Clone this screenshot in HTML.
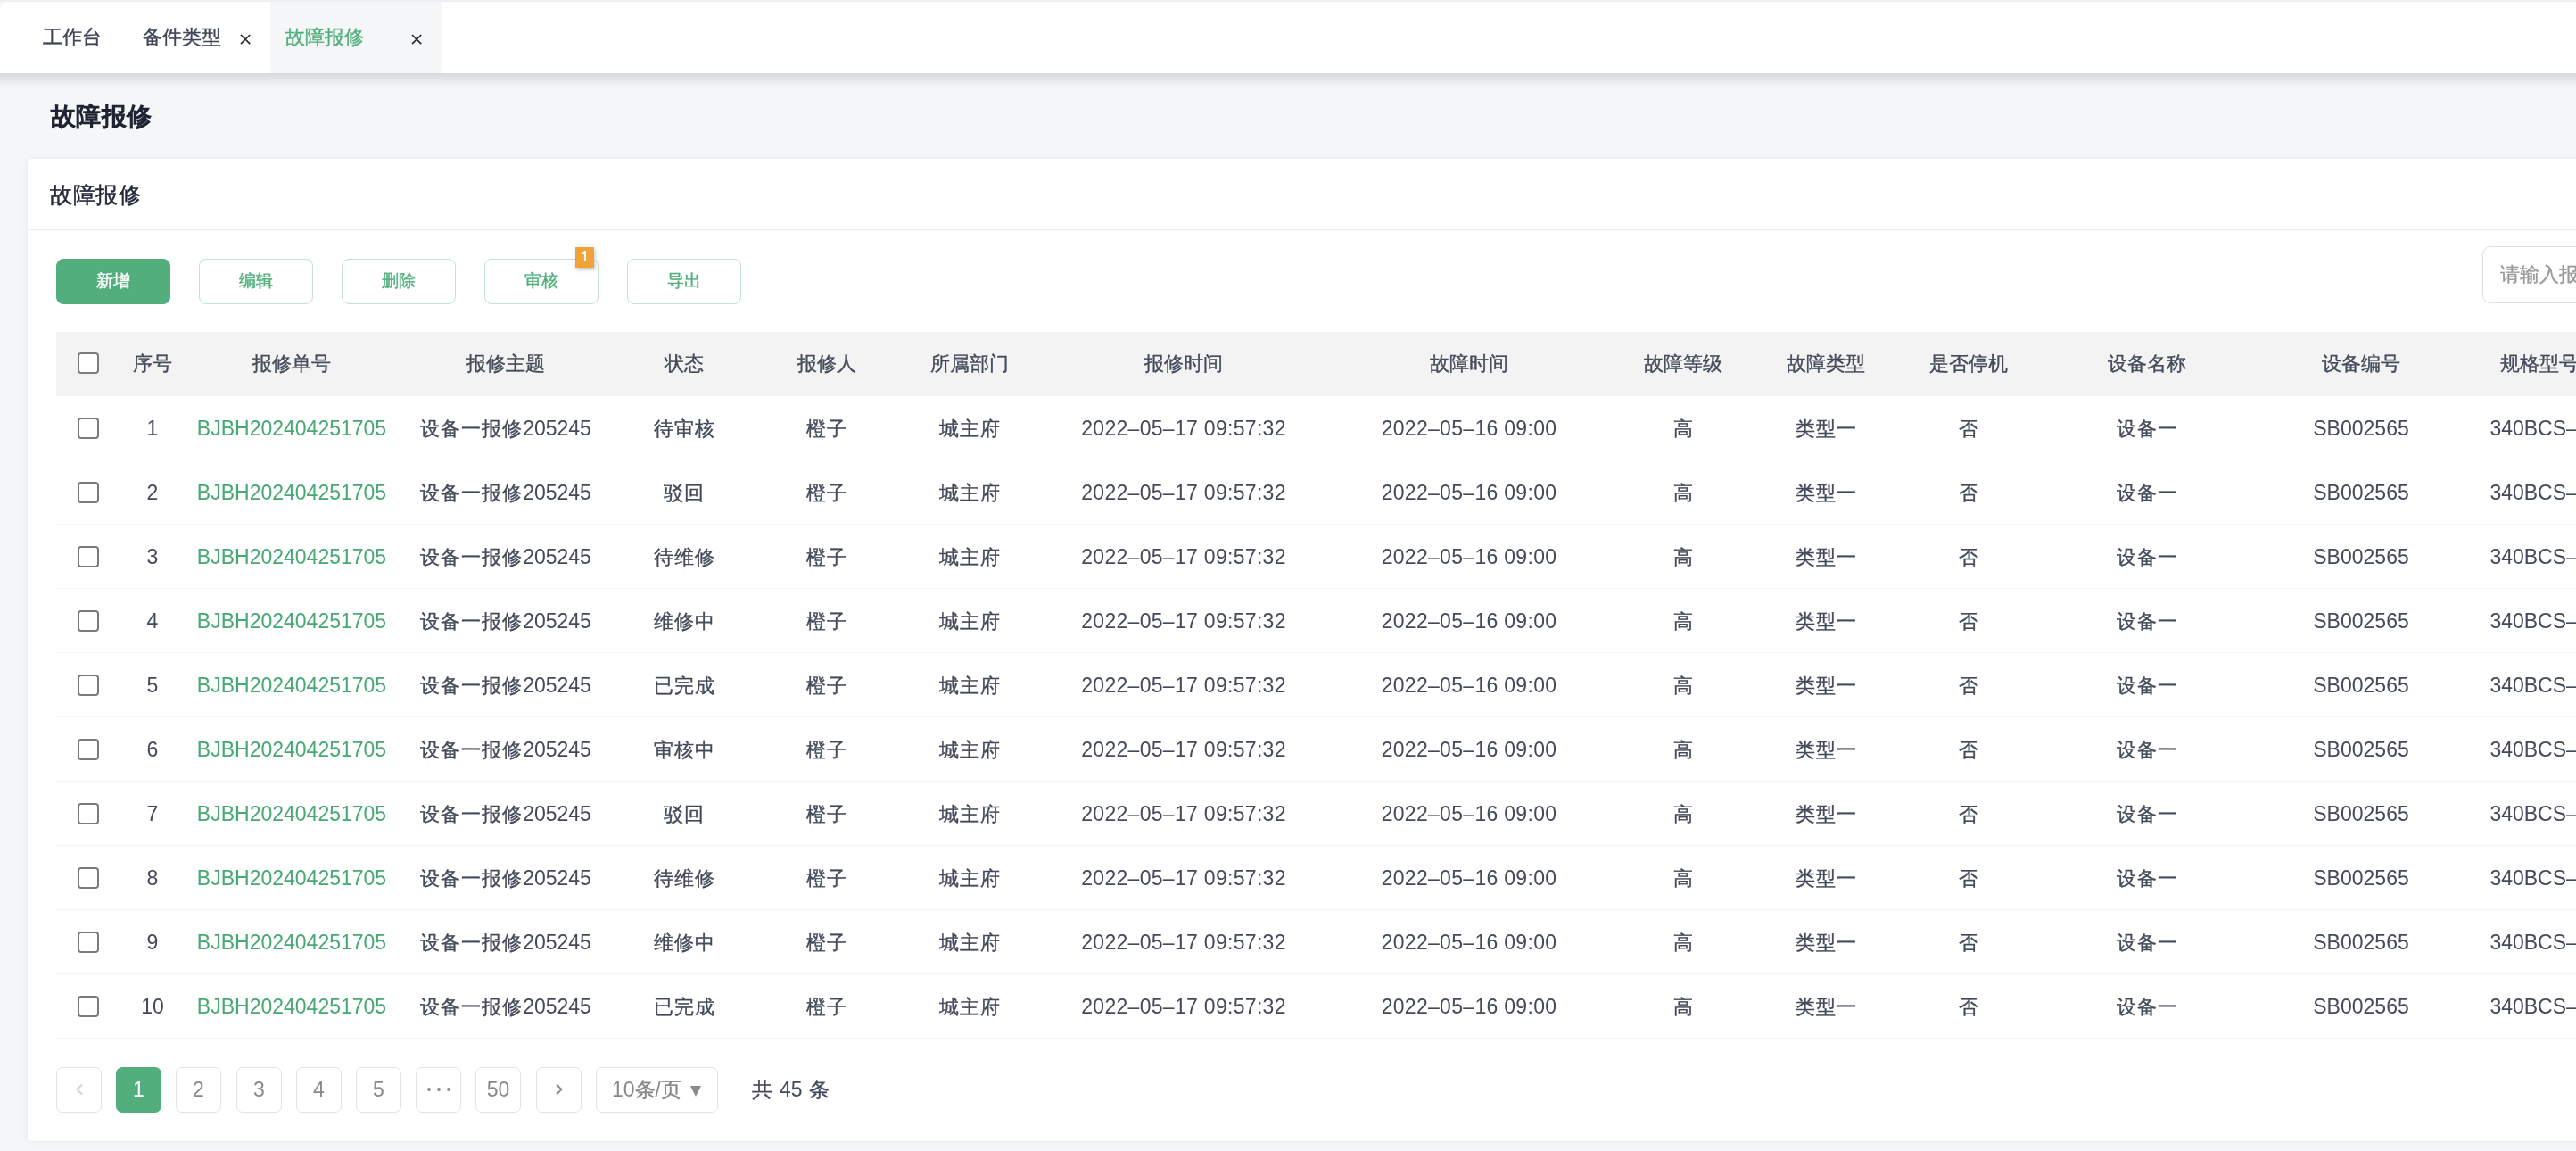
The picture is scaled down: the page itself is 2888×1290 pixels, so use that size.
<!DOCTYPE html>
<html><head><meta charset="utf-8">
<style>
*{margin:0;padding:0;box-sizing:border-box}
html,body{width:2888px;height:1290px;overflow:hidden;-webkit-font-smoothing:antialiased;background:#f5f6f8;font-family:"Liberation Sans",sans-serif;color:#434a5a}
.abs{position:absolute}
b.c{font-weight:inherit;-webkit-text-stroke:0.35px currentColor}
.td b.c{font-size:22px;letter-spacing:1px}
.btn b.c{-webkit-text-stroke:0.4px currentColor}
#title b.c{-webkit-text-stroke:1.4px currentColor}
#ctitle b.c{-webkit-text-stroke:0.45px currentColor}
#topline{position:absolute;left:0;top:0;width:2888px;height:2px;background:#edeff2}
#tabs{position:absolute;left:0;top:2px;width:2900px;height:80px;background:#fff;border-top-left-radius:9px}
#tabshadow{position:absolute;left:0;top:82px;width:2888px;height:16px;background:linear-gradient(#d8d9dc 0px,#dcdde0 3px,#e6e7ea 8px,#f0f1f3 12px,#f5f6f8 16px)}
.tab{position:absolute;top:0;height:80px;line-height:80px;font-size:22px;color:#3f4656;white-space:nowrap}
.tab.act{background:#f5f6f8;color:#4fae7b}
.x{position:absolute;top:36px;width:12px;height:12px}
.x svg{display:block}
#title{position:absolute;left:57px;top:111px;letter-spacing:0.4px;font-size:28px;font-weight:400;color:#1e2332;line-height:40px}
#card{position:absolute;left:31px;top:178px;width:2900px;height:1101px;background:#fff;border-radius:4px;box-shadow:0 0 2px rgba(0,0,0,0.07),0 0 10px rgba(0,0,0,0.05)}
#ctitle{position:absolute;left:56px;top:198px;letter-spacing:0.7px;font-size:25px;color:#22283a;line-height:40px}
#divider{position:absolute;left:31px;top:257px;width:2860px;height:1px;background:#e9ebee}
.btn{position:absolute;top:290px;width:128px;height:51px;border-radius:8px;border:1.5px solid #bfe4cf;background:#fff;color:#4fae7b;font-size:19px;text-align:center;line-height:48px;-webkit-text-stroke:0.5px currentColor}
.btn.pri{background:#52ae7d;border-color:#52ae7d;color:#fff}
.badge{position:absolute;left:645px;top:277px;width:21px;height:23px;background:#f0a33a;color:#fff;font-size:16px;font-weight:400;-webkit-text-stroke:0.7px #fff;text-align:center;line-height:23px;box-shadow:1px 2px 4px rgba(0,0,0,0.25)}
#search{position:absolute;left:2783px;top:276px;width:300px;height:64px;border:1.5px solid #dcdfe6;border-radius:9px;background:#fff}
#search span{position:absolute;left:19px;top:0;line-height:61px;font-size:22px;color:#999}
#thead{position:absolute;left:63px;top:372px;width:2900px;height:72px;background:#f3f3f3}
.th{position:absolute;top:372px;height:72px;line-height:72px;text-align:center;font-size:22px;color:#434a5a;white-space:nowrap}
.tr{position:absolute;left:0;width:2888px;height:72px}
.tr:after{content:"";position:absolute;left:63px;top:71px;width:2900px;height:1px;background:#f3f4f6}
.td{position:absolute;top:0;height:72px;line-height:72px;text-align:center;font-size:23px;color:#434a5a;white-space:nowrap}
.lnk{color:#46a872}
.cb{display:inline-block;width:24px;height:24px;border:2px solid #7b7b7b;border-radius:4px;vertical-align:middle;margin-top:-4px;background:#fff}
.pg{position:absolute;top:1196px;width:51px;height:51px;border:1.5px solid #e3e3e3;border-radius:7px;text-align:center;line-height:48px;font-size:23px;color:#888}
.pg.on{background:#52ae7d;border-color:#52ae7d;color:#fff}
.chev{vertical-align:middle;margin-top:-3px}
#sel{position:absolute;left:668px;top:1196px;width:137px;height:51px;border:1.5px solid #e3e3e3;border-radius:7px;font-size:23px;color:#888;line-height:48px;white-space:nowrap}
#sel span{position:absolute;left:17px}
#sel i{position:absolute;left:105px;top:20px;width:0;height:0;border-left:6.5px solid transparent;border-right:6.5px solid transparent;border-top:12px solid #8a8a8a}
#total{position:absolute;left:843px;word-spacing:1.5px;top:1196px;line-height:51px;font-size:23px;color:#434a5a;white-space:nowrap}
</style></head><body><div id="root" style="position:absolute;left:0;top:0;width:2888px;height:1290px;will-change:transform">
<div id="topline"></div>
<div id="tabs">
  <div class="tab" style="left:48px"><b class="c">工作台</b></div>
  <div class="tab" style="left:160px"><b class="c">备件类型</b></div>
  <i class="x" style="left:268.5px"><svg width="12" height="12" viewBox="0 0 12 12"><path d="M1 1L11.2 11.2M11.2 1L1 11.2" stroke="#2a2a2a" stroke-width="1.7"/></svg></i>
  <div class="tab act" style="left:303px;width:192px;padding-left:17px"><b class="c">故障报修</b></div>
  <i class="x" style="left:460.5px"><svg width="12" height="12" viewBox="0 0 12 12"><path d="M1 1L11.2 11.2M11.2 1L1 11.2" stroke="#2a2a2a" stroke-width="1.7"/></svg></i>
</div>
<div id="tabshadow"></div>
<div id="title"><b class="c">故障报修</b></div>
<div id="card"></div>
<div id="ctitle"><b class="c">故障报修</b></div>
<div id="divider"></div>
<div class="btn pri" style="left:63px"><b class="c">新增</b></div>
<div class="btn" style="left:223px"><b class="c">编辑</b></div>
<div class="btn" style="left:383px"><b class="c">删除</b></div>
<div class="btn" style="left:543px"><b class="c">审核</b></div>
<div class="badge"><svg width="21" height="23" viewBox="0 0 21 23" style="display:block"><path d="M9.9 4.1H12.05V16.1H9.9V7.9H6.9V6.3Q9.4 6.1 9.9 4.1Z" fill="#fff"/></svg></div>
<div class="btn" style="left:703px"><b class="c">导出</b></div>
<div id="search"><span><b class="c">请输入报修单号</b></span></div>
<div id="thead"></div>
<div class="th" style="left:63px;width:72px"><i class="cb"></i></div><div class="th" style="left:135px;width:72px"><b class="c">序号</b></div><div class="th" style="left:207px;width:240px"><b class="c">报修单号</b></div><div class="th" style="left:447px;width:240px"><b class="c">报修主题</b></div><div class="th" style="left:687px;width:160px"><b class="c">状态</b></div><div class="th" style="left:847px;width:160px"><b class="c">报修人</b></div><div class="th" style="left:1007px;width:160px"><b class="c">所属部门</b></div><div class="th" style="left:1167px;width:320px"><b class="c">报修时间</b></div><div class="th" style="left:1487px;width:320px"><b class="c">故障时间</b></div><div class="th" style="left:1807px;width:160px"><b class="c">故障等级</b></div><div class="th" style="left:1967px;width:160px"><b class="c">故障类型</b></div><div class="th" style="left:2127px;width:160px"><b class="c">是否停机</b></div><div class="th" style="left:2287px;width:240px"><b class="c">设备名称</b></div><div class="th" style="left:2527px;width:240px"><b class="c">设备编号</b></div><div class="th" style="left:2767px;width:160px"><b class="c">规格型号</b></div>
<div class="tr" style="top:444px"><div class="td" style="left:63px;width:72px"><i class="cb"></i></div><div class="td" style="left:135px;width:72px">1</div><div class="td" style="left:207px;width:240px"><span class="lnk">BJBH202404251705</span></div><div class="td" style="left:447px;width:240px"><b class="c">设备一报修</b>205245</div><div class="td" style="left:687px;width:160px"><b class="c">待审核</b></div><div class="td" style="left:847px;width:160px"><b class="c">橙子</b></div><div class="td" style="left:1007px;width:160px"><b class="c">城主府</b></div><div class="td" style="left:1167px;width:320px"><span style="letter-spacing:0.3px">2022–05–17 09:57:32</span></div><div class="td" style="left:1487px;width:320px"><span style="letter-spacing:0.3px">2022–05–16 09:00</span></div><div class="td" style="left:1807px;width:160px"><b class="c">高</b></div><div class="td" style="left:1967px;width:160px"><b class="c">类型一</b></div><div class="td" style="left:2127px;width:160px"><b class="c">否</b></div><div class="td" style="left:2287px;width:240px"><b class="c">设备一</b></div><div class="td" style="left:2527px;width:240px">SB002565</div><div class="td" style="left:2767px;width:160px">340BCS–1</div></div><div class="tr" style="top:516px"><div class="td" style="left:63px;width:72px"><i class="cb"></i></div><div class="td" style="left:135px;width:72px">2</div><div class="td" style="left:207px;width:240px"><span class="lnk">BJBH202404251705</span></div><div class="td" style="left:447px;width:240px"><b class="c">设备一报修</b>205245</div><div class="td" style="left:687px;width:160px"><b class="c">驳回</b></div><div class="td" style="left:847px;width:160px"><b class="c">橙子</b></div><div class="td" style="left:1007px;width:160px"><b class="c">城主府</b></div><div class="td" style="left:1167px;width:320px"><span style="letter-spacing:0.3px">2022–05–17 09:57:32</span></div><div class="td" style="left:1487px;width:320px"><span style="letter-spacing:0.3px">2022–05–16 09:00</span></div><div class="td" style="left:1807px;width:160px"><b class="c">高</b></div><div class="td" style="left:1967px;width:160px"><b class="c">类型一</b></div><div class="td" style="left:2127px;width:160px"><b class="c">否</b></div><div class="td" style="left:2287px;width:240px"><b class="c">设备一</b></div><div class="td" style="left:2527px;width:240px">SB002565</div><div class="td" style="left:2767px;width:160px">340BCS–1</div></div><div class="tr" style="top:588px"><div class="td" style="left:63px;width:72px"><i class="cb"></i></div><div class="td" style="left:135px;width:72px">3</div><div class="td" style="left:207px;width:240px"><span class="lnk">BJBH202404251705</span></div><div class="td" style="left:447px;width:240px"><b class="c">设备一报修</b>205245</div><div class="td" style="left:687px;width:160px"><b class="c">待维修</b></div><div class="td" style="left:847px;width:160px"><b class="c">橙子</b></div><div class="td" style="left:1007px;width:160px"><b class="c">城主府</b></div><div class="td" style="left:1167px;width:320px"><span style="letter-spacing:0.3px">2022–05–17 09:57:32</span></div><div class="td" style="left:1487px;width:320px"><span style="letter-spacing:0.3px">2022–05–16 09:00</span></div><div class="td" style="left:1807px;width:160px"><b class="c">高</b></div><div class="td" style="left:1967px;width:160px"><b class="c">类型一</b></div><div class="td" style="left:2127px;width:160px"><b class="c">否</b></div><div class="td" style="left:2287px;width:240px"><b class="c">设备一</b></div><div class="td" style="left:2527px;width:240px">SB002565</div><div class="td" style="left:2767px;width:160px">340BCS–1</div></div><div class="tr" style="top:660px"><div class="td" style="left:63px;width:72px"><i class="cb"></i></div><div class="td" style="left:135px;width:72px">4</div><div class="td" style="left:207px;width:240px"><span class="lnk">BJBH202404251705</span></div><div class="td" style="left:447px;width:240px"><b class="c">设备一报修</b>205245</div><div class="td" style="left:687px;width:160px"><b class="c">维修中</b></div><div class="td" style="left:847px;width:160px"><b class="c">橙子</b></div><div class="td" style="left:1007px;width:160px"><b class="c">城主府</b></div><div class="td" style="left:1167px;width:320px"><span style="letter-spacing:0.3px">2022–05–17 09:57:32</span></div><div class="td" style="left:1487px;width:320px"><span style="letter-spacing:0.3px">2022–05–16 09:00</span></div><div class="td" style="left:1807px;width:160px"><b class="c">高</b></div><div class="td" style="left:1967px;width:160px"><b class="c">类型一</b></div><div class="td" style="left:2127px;width:160px"><b class="c">否</b></div><div class="td" style="left:2287px;width:240px"><b class="c">设备一</b></div><div class="td" style="left:2527px;width:240px">SB002565</div><div class="td" style="left:2767px;width:160px">340BCS–1</div></div><div class="tr" style="top:732px"><div class="td" style="left:63px;width:72px"><i class="cb"></i></div><div class="td" style="left:135px;width:72px">5</div><div class="td" style="left:207px;width:240px"><span class="lnk">BJBH202404251705</span></div><div class="td" style="left:447px;width:240px"><b class="c">设备一报修</b>205245</div><div class="td" style="left:687px;width:160px"><b class="c">已完成</b></div><div class="td" style="left:847px;width:160px"><b class="c">橙子</b></div><div class="td" style="left:1007px;width:160px"><b class="c">城主府</b></div><div class="td" style="left:1167px;width:320px"><span style="letter-spacing:0.3px">2022–05–17 09:57:32</span></div><div class="td" style="left:1487px;width:320px"><span style="letter-spacing:0.3px">2022–05–16 09:00</span></div><div class="td" style="left:1807px;width:160px"><b class="c">高</b></div><div class="td" style="left:1967px;width:160px"><b class="c">类型一</b></div><div class="td" style="left:2127px;width:160px"><b class="c">否</b></div><div class="td" style="left:2287px;width:240px"><b class="c">设备一</b></div><div class="td" style="left:2527px;width:240px">SB002565</div><div class="td" style="left:2767px;width:160px">340BCS–1</div></div><div class="tr" style="top:804px"><div class="td" style="left:63px;width:72px"><i class="cb"></i></div><div class="td" style="left:135px;width:72px">6</div><div class="td" style="left:207px;width:240px"><span class="lnk">BJBH202404251705</span></div><div class="td" style="left:447px;width:240px"><b class="c">设备一报修</b>205245</div><div class="td" style="left:687px;width:160px"><b class="c">审核中</b></div><div class="td" style="left:847px;width:160px"><b class="c">橙子</b></div><div class="td" style="left:1007px;width:160px"><b class="c">城主府</b></div><div class="td" style="left:1167px;width:320px"><span style="letter-spacing:0.3px">2022–05–17 09:57:32</span></div><div class="td" style="left:1487px;width:320px"><span style="letter-spacing:0.3px">2022–05–16 09:00</span></div><div class="td" style="left:1807px;width:160px"><b class="c">高</b></div><div class="td" style="left:1967px;width:160px"><b class="c">类型一</b></div><div class="td" style="left:2127px;width:160px"><b class="c">否</b></div><div class="td" style="left:2287px;width:240px"><b class="c">设备一</b></div><div class="td" style="left:2527px;width:240px">SB002565</div><div class="td" style="left:2767px;width:160px">340BCS–1</div></div><div class="tr" style="top:876px"><div class="td" style="left:63px;width:72px"><i class="cb"></i></div><div class="td" style="left:135px;width:72px">7</div><div class="td" style="left:207px;width:240px"><span class="lnk">BJBH202404251705</span></div><div class="td" style="left:447px;width:240px"><b class="c">设备一报修</b>205245</div><div class="td" style="left:687px;width:160px"><b class="c">驳回</b></div><div class="td" style="left:847px;width:160px"><b class="c">橙子</b></div><div class="td" style="left:1007px;width:160px"><b class="c">城主府</b></div><div class="td" style="left:1167px;width:320px"><span style="letter-spacing:0.3px">2022–05–17 09:57:32</span></div><div class="td" style="left:1487px;width:320px"><span style="letter-spacing:0.3px">2022–05–16 09:00</span></div><div class="td" style="left:1807px;width:160px"><b class="c">高</b></div><div class="td" style="left:1967px;width:160px"><b class="c">类型一</b></div><div class="td" style="left:2127px;width:160px"><b class="c">否</b></div><div class="td" style="left:2287px;width:240px"><b class="c">设备一</b></div><div class="td" style="left:2527px;width:240px">SB002565</div><div class="td" style="left:2767px;width:160px">340BCS–1</div></div><div class="tr" style="top:948px"><div class="td" style="left:63px;width:72px"><i class="cb"></i></div><div class="td" style="left:135px;width:72px">8</div><div class="td" style="left:207px;width:240px"><span class="lnk">BJBH202404251705</span></div><div class="td" style="left:447px;width:240px"><b class="c">设备一报修</b>205245</div><div class="td" style="left:687px;width:160px"><b class="c">待维修</b></div><div class="td" style="left:847px;width:160px"><b class="c">橙子</b></div><div class="td" style="left:1007px;width:160px"><b class="c">城主府</b></div><div class="td" style="left:1167px;width:320px"><span style="letter-spacing:0.3px">2022–05–17 09:57:32</span></div><div class="td" style="left:1487px;width:320px"><span style="letter-spacing:0.3px">2022–05–16 09:00</span></div><div class="td" style="left:1807px;width:160px"><b class="c">高</b></div><div class="td" style="left:1967px;width:160px"><b class="c">类型一</b></div><div class="td" style="left:2127px;width:160px"><b class="c">否</b></div><div class="td" style="left:2287px;width:240px"><b class="c">设备一</b></div><div class="td" style="left:2527px;width:240px">SB002565</div><div class="td" style="left:2767px;width:160px">340BCS–1</div></div><div class="tr" style="top:1020px"><div class="td" style="left:63px;width:72px"><i class="cb"></i></div><div class="td" style="left:135px;width:72px">9</div><div class="td" style="left:207px;width:240px"><span class="lnk">BJBH202404251705</span></div><div class="td" style="left:447px;width:240px"><b class="c">设备一报修</b>205245</div><div class="td" style="left:687px;width:160px"><b class="c">维修中</b></div><div class="td" style="left:847px;width:160px"><b class="c">橙子</b></div><div class="td" style="left:1007px;width:160px"><b class="c">城主府</b></div><div class="td" style="left:1167px;width:320px"><span style="letter-spacing:0.3px">2022–05–17 09:57:32</span></div><div class="td" style="left:1487px;width:320px"><span style="letter-spacing:0.3px">2022–05–16 09:00</span></div><div class="td" style="left:1807px;width:160px"><b class="c">高</b></div><div class="td" style="left:1967px;width:160px"><b class="c">类型一</b></div><div class="td" style="left:2127px;width:160px"><b class="c">否</b></div><div class="td" style="left:2287px;width:240px"><b class="c">设备一</b></div><div class="td" style="left:2527px;width:240px">SB002565</div><div class="td" style="left:2767px;width:160px">340BCS–1</div></div><div class="tr" style="top:1092px"><div class="td" style="left:63px;width:72px"><i class="cb"></i></div><div class="td" style="left:135px;width:72px">10</div><div class="td" style="left:207px;width:240px"><span class="lnk">BJBH202404251705</span></div><div class="td" style="left:447px;width:240px"><b class="c">设备一报修</b>205245</div><div class="td" style="left:687px;width:160px"><b class="c">已完成</b></div><div class="td" style="left:847px;width:160px"><b class="c">橙子</b></div><div class="td" style="left:1007px;width:160px"><b class="c">城主府</b></div><div class="td" style="left:1167px;width:320px"><span style="letter-spacing:0.3px">2022–05–17 09:57:32</span></div><div class="td" style="left:1487px;width:320px"><span style="letter-spacing:0.3px">2022–05–16 09:00</span></div><div class="td" style="left:1807px;width:160px"><b class="c">高</b></div><div class="td" style="left:1967px;width:160px"><b class="c">类型一</b></div><div class="td" style="left:2127px;width:160px"><b class="c">否</b></div><div class="td" style="left:2287px;width:240px"><b class="c">设备一</b></div><div class="td" style="left:2527px;width:240px">SB002565</div><div class="td" style="left:2767px;width:160px">340BCS–1</div></div>
<div class="pg" style="left:63px"><svg class="chev" width="10" height="14" viewBox="0 0 10 14"><path d="M8 1.5L2.5 7L8 12.5" fill="none" stroke="#d2d2d2" stroke-width="2"/></svg></div><div class="pg on" style="left:130px">1</div><div class="pg" style="left:197px">2</div><div class="pg" style="left:265px">3</div><div class="pg" style="left:332px">4</div><div class="pg" style="left:399px">5</div><div class="pg" style="left:466px"><svg class="chev" width="28" height="6" viewBox="0 0 28 6"><circle cx="3" cy="3" r="1.9" fill="#888"/><circle cx="14" cy="3" r="1.9" fill="#888"/><circle cx="25" cy="3" r="1.9" fill="#888"/></svg></div><div class="pg" style="left:533px">50</div><div class="pg" style="left:601px"><svg class="chev" width="10" height="14" viewBox="0 0 10 14"><path d="M2 1.5L7.5 7L2 12.5" fill="none" stroke="#8a8a8a" stroke-width="1.8"/></svg></div>
<div id="sel"><span>10<b class="c">条</b>/<b class="c">页</b></span><i></i></div>
<div id="total"><b class="c">共</b> 45 <b class="c">条</b></div>
</div></body></html>
